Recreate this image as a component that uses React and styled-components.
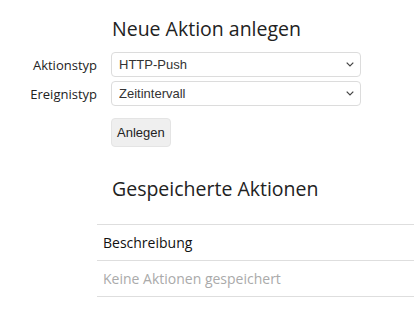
import React from "react";
import styled, { createGlobalStyle } from "styled-components";

const GlobalStyle = createGlobalStyle`
  html, body {
    margin: 0;
    padding: 0;
    background: #fff;
  }
  body {
    font-family: "Open Sans", "Noto Sans", sans-serif;
    color: #222;
    overflow: hidden;
  }
`;

const Page = styled.div`
  padding-top: 15px;
  width: 414px;
`;

const Heading = styled.h2`
  margin: 0 0 0 112px;
  font-size: 19.5px;
  font-weight: 400;
  line-height: 28px;
  color: #222;
`;

const Form = styled.form`
  display: grid;
  grid-template-columns: 97px 250px;
  column-gap: 14px;
  row-gap: 4px;
  margin-top: 9px;
  align-items: center;
`;

const Label = styled.label`
  text-align: right;
  font-size: 13px;
  color: #222;
`;

const SelectWrap = styled.div`
  position: relative;
  height: 25px;
`;

const Select = styled.select`
  appearance: none;
  width: 100%;
  height: 25px;
  box-sizing: border-box;
  border: 1px solid #dcdcdc;
  border-radius: 4px;
  background: #fff;
  padding: 0 24px 0 7px;
  font-family: "Liberation Sans", Arial, sans-serif;
  font-size: 13px;
  color: #333;
  outline: none;
`;

const Chevron = styled.svg`
  position: absolute;
  right: 7px;
  top: 10px;
  pointer-events: none;
`;

const Actions = styled.div`
  grid-column: 2;
  margin-top: 8px;
`;

const Button = styled.button`
  height: 29px;
  padding: 0 5px;
  border: 1px solid #e4e4e4;
  border-radius: 4px;
  background: #efefef;
  font-family: "Liberation Sans", Arial, sans-serif;
  font-size: 13px;
  color: #222;
`;

const SecondHeading = styled(Heading)`
  margin-top: 28px;
`;

const Table = styled.table`
  margin: 21px 0 0 97px;
  width: 320px;
  border-collapse: collapse;
  font-size: 14px;
`;

const Cell = styled.td`
  height: 35px;
  padding: 0 6px;
  border-top: 1px solid #dedede;
  border-bottom: 1px solid #dedede;
  color: ${(p) => (p.$muted ? "#aaa" : "#111")};
`;

const ChevronIcon = () => (
  <Chevron width="8" height="5" viewBox="0 0 8 5">
    <path d="M0.7 0.7l3.3 3.3L7.3 0.7" fill="none" stroke="#444" strokeWidth="1.2" />
  </Chevron>
);

export default function App() {
  return (
    <Page>
      <GlobalStyle />
      <Heading>Neue Aktion anlegen</Heading>
      <Form onSubmit={(e) => e.preventDefault()}>
        <Label htmlFor="typ">Aktionstyp</Label>
        <SelectWrap>
          <Select id="typ" defaultValue="push">
            <option value="push">HTTP-Push</option>
          </Select>
          <ChevronIcon />
        </SelectWrap>
        <Label htmlFor="event">Ereignistyp</Label>
        <SelectWrap>
          <Select id="event" defaultValue="interval">
            <option value="interval">Zeitintervall</option>
          </Select>
          <ChevronIcon />
        </SelectWrap>
        <Actions>
          <Button type="submit">Anlegen</Button>
        </Actions>
      </Form>
      <SecondHeading>Gespeicherte Aktionen</SecondHeading>
      <Table>
        <tbody>
          <tr>
            <Cell>Beschreibung</Cell>
          </tr>
          <tr>
            <Cell $muted>Keine Aktionen gespeichert</Cell>
          </tr>
        </tbody>
      </Table>
    </Page>
  );
}
